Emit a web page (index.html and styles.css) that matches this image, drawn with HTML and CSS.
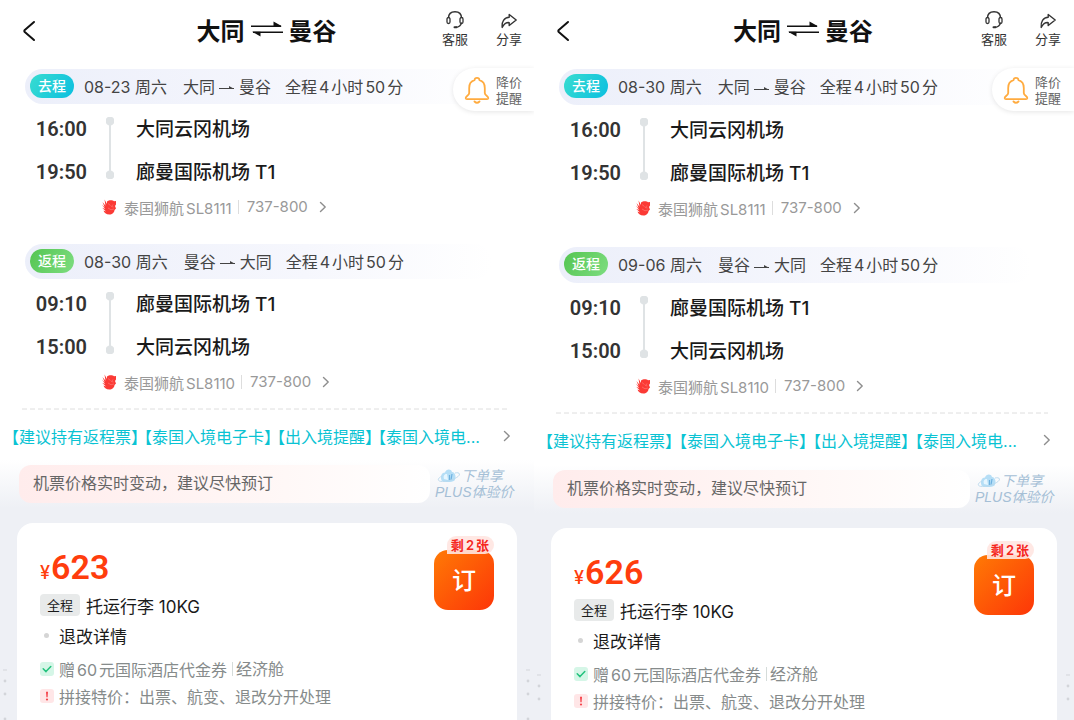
FILE: index.html
```html
<!DOCTYPE html>
<html lang="zh-CN">
<head>
    <meta charset="UTF-8">
    <meta name="viewport" content="width=device-width, initial-scale=1.0">
    <title>大同 - 曼谷 往返机票</title>
    <link rel="stylesheet" href="styles.css">
</head>
<body>

<!-- Shared icons -->
<svg class="sprite" aria-hidden="true">
    <symbol id="back" viewBox="0 0 14 22"><path d="M12 2 L2.500 10.300 Q2 11 2.500 11.700 L12 20" fill="none" stroke="#111" stroke-width="2" stroke-linecap="round" stroke-linejoin="round"/></symbol>
    <symbol id="swap" viewBox="0 0 32 18"><path d="M0 6.200H31L22.500 1.500V6.200M32 11.700H1L9.500 16.500V11.700" fill="#111" stroke="none"/><path d="M0 6.200H30M32 12.200H2" stroke="#111" stroke-width="1.600"/></symbol>
    <symbol id="headset" viewBox="0 0 20 20"><path d="M3.500 8C3.500 4 6 1.700 10 1.700S16.500 4 16.500 8M16.500 12.500C16 15.500 14 17.200 10.500 17.300" fill="none" stroke="#333" stroke-width="1.400"/><rect x="2" y="7.500" width="3" height="6" rx="1.500" fill="none" stroke="#333" stroke-width="1.300"/><rect x="15" y="7.500" width="3" height="6" rx="1.500" fill="none" stroke="#333" stroke-width="1.300"/><rect x="8.500" y="16.300" width="4" height="2" rx="1" fill="#333"/></symbol>
    <symbol id="share" viewBox="0 0 20 20"><path d="M10.200 4.500 L17.200 10 L10.200 15.500 V12.600 C7 12.300 5 14 3.200 17.400 C2.600 11.500 5 7.700 10.200 7.300 Z" fill="none" stroke="#333" stroke-width="1.400" stroke-linejoin="round"/></symbol>
    <symbol id="bell" viewBox="0 0 26 28"><path d="M10.500 4.200C10.800 1.200 15.200 1.200 15.500 4.200C19.500 5.300 20.800 8.500 20.800 12V17C20.800 19.500 24.500 20 24.300 22.200C24.200 23 23.800 23.200 23 23.200H3C2.200 23.200 1.800 23 1.700 22.200C1.500 20 5.200 19.500 5.200 17V12C5.200 8.500 6.500 5.300 10.500 4.200Z" fill="none" stroke="#ffab3f" stroke-width="1.800" stroke-linejoin="round"/><path d="M10.500 25.500Q13 28 15.500 25.500" fill="none" stroke="#ffab3f" stroke-width="1.800" stroke-linecap="round"/></symbol>
    <symbol id="to" viewBox="0 0 16 8"><path d="M0 4.500H15" stroke="#444"/><path d="M10 2L15 4.800H10Z" fill="#444"/></symbol>
    <symbol id="next" viewBox="0 0 8 12"><path d="M1.500 1.500 L6.200 6 L1.500 10.500" fill="none" stroke="#8e8e8e" stroke-width="1.400" stroke-linecap="round" stroke-linejoin="round"/></symbol>
    <symbol id="lion" viewBox="0 0 16 16"><path d="M6 2.500C8 .800 11.500 .800 13 2.200L15 2V5.500L14 7L15 9.500L13.500 11C13.500 13.500 11 15.500 8.500 15.500C5 15.500 3 13.500 2.500 11.500L5 12.500L1.200 8.800L4.200 10L.700 5.500L3.700 8.200L1.500 3L4.500 6.800L3.500 .500L6 5Z" fill="#fb3a35"/><path d="M7 4.500L9.500 6.500M12 5.500L10.500 7.500L12.500 8M7 9Q10 12 13 10" fill="none" stroke="#ff8f8b" stroke-width=".5"/></symbol>
    <symbol id="check" viewBox="0 0 14 14"><rect width="14" height="14" rx="3" fill="#d5f6e7"/><path d="M3.200 6.800 L6 9.600 L10.800 4.600" fill="none" stroke="#22c27d" stroke-width="1.500" stroke-linecap="round" stroke-linejoin="round"/></symbol>
    <symbol id="warn" viewBox="0 0 14 14"><rect width="14" height="14" rx="3" fill="#ffe6e7"/><path d="M6 2.800H8L7.600 8.300H6.400Z" fill="#f5444c"/><circle cx="7" cy="10.500" r="1.100" fill="#f5444c"/></symbol>
    <symbol id="plus" viewBox="0 0 24 16"><path d="M4.500 12.500C3 8 5 4.500 8 4.500C9 1 14 .500 15 4C18.500 4.500 19.500 9 17.500 12.500C14 14.500 8 14.500 4.500 12.500Z" fill="#b5def6"/><path d="M7 11C5.800 8 7.500 5.500 10 6L11 12Z" fill="#e6f6ff"/><path d="M12.500 7V12M15 6L14 12" stroke="#6fb2e0" stroke-width="1.200"/><path d="M5 8C0 10.500 0 13.500 5.500 13.500C13 13.500 23 9 22.500 6C22.300 4.700 20 4.500 18 5" fill="none" stroke="#b9d8ec" stroke-width=".9"/></symbol>
    <symbol id="marks" viewBox="0 0 4 52"><path d="M0 1H4" stroke="#d3d5da"/><circle cx="2" cy="12" r="1.400" fill="#d3d5da"/><circle cx="2" cy="25" r="1.400" fill="#d3d5da"/><circle cx="2" cy="50" r="1.400" fill="#d3d5da"/></symbol>
</svg>

<main class="compare">

    <section class="panel">
        <header class="topbar">
            <button class="icon-btn back" aria-label="返回"><svg width="14" height="22"><use href="#back"/></svg></button>
            <h1 class="route">大同<svg width="32" height="18"><use href="#swap"/></svg>曼谷</h1>
            <div class="actions">
                <button class="icon-btn"><svg width="20" height="20"><use href="#headset"/></svg>客服</button>
                <button class="icon-btn"><svg width="20" height="20"><use href="#share"/></svg>分享</button>
            </div>
        </header>
        <button class="remind"><svg width="26" height="28"><use href="#bell"/></svg><span>降价<br>提醒</span></button>

        <div class="legs">
            <article class="leg">
                <div class="leg-bar">
                    <span class="leg-tag go">去程</span>
                    <span class="date">08-23 周六</span>
                    <span class="cities">大同<svg width="16" height="8"><use href="#to"/></svg>曼谷</span>
                    <span>全程<span class="num">4</span>小时<span class="num">50</span>分</span>
                </div>
                <div class="stops">
                    <time>16:00</time><span class="line"></span><span class="airport">大同云冈机场</span>
                    <time>19:50</time><span class="airport">廊曼国际机场 T1</span>
                </div>
                <a class="flight" href="#"><svg width="16" height="16"><use href="#lion"/></svg><span>泰国狮航<span class="num">SL8111</span></span><span class="model">737-800</span><svg width="8" height="12"><use href="#next"/></svg></a>
            </article>
            <article class="leg">
                <div class="leg-bar">
                    <span class="leg-tag back-leg">返程</span>
                    <span class="date">08-30 周六</span>
                    <span class="cities">曼谷<svg width="16" height="8"><use href="#to"/></svg>大同</span>
                    <span>全程<span class="num">4</span>小时<span class="num">50</span>分</span>
                </div>
                <div class="stops">
                    <time>09:10</time><span class="line"></span><span class="airport">廊曼国际机场 T1</span>
                    <time>15:00</time><span class="airport">大同云冈机场</span>
                </div>
                <a class="flight" href="#"><svg width="16" height="16"><use href="#lion"/></svg><span>泰国狮航<span class="num">SL8110</span></span><span class="model">737-800</span><svg width="8" height="12"><use href="#next"/></svg></a>
            </article>
        </div>

        <svg class="dash" height="2" aria-hidden="true"><line x1="0" y1="1" x2="100%" y2="1"/></svg>
        <a class="tips" href="#"><span class="tips-text"><span>【建议持有返程票】</span><span>【泰国入境电子卡】</span><span>【出入境提醒】</span><span>【泰国入境电...</span></span><svg width="8" height="12"><use href="#next"/></svg></a>

        <div class="lower">
            <div class="notice-row">
                <p class="notice">机票价格实时变动，建议尽快预订</p>
                <p class="plus"><svg width="24" height="16"><use href="#plus"/></svg>下单享<br>PLUS体验价</p>
            </div>
            <div class="offer">
                <svg class="marks marks-left" width="4" height="52" aria-hidden="true"><use href="#marks"/></svg>
                <svg class="marks marks-right" width="4" height="52" aria-hidden="true"><use href="#marks"/></svg>
                <div class="offer-info">
                    <div class="price"><small>¥</small>623</div>
                    <div class="row"><span class="label">全程</span>托运行李 10KG</div>
                    <div class="row refund">退改详情</div>
                    <div class="row perk"><svg width="14" height="14"><use href="#check"/></svg><span>赠<span class="num">60</span>元国际酒店代金券</span><span class="cabin">经济舱</span></div>
                    <div class="row perk"><svg width="14" height="14"><use href="#warn"/></svg>拼接特价：出票、航变、退改分开处理</div>
                </div>
                <div class="book-box">
                    <button class="book">订</button>
                    <span class="left-count">剩<span class="num">2</span>张</span>
                </div>
            </div>
        </div>
    </section>

    <section class="panel roomy">
        <header class="topbar">
            <button class="icon-btn back" aria-label="返回"><svg width="14" height="22"><use href="#back"/></svg></button>
            <h1 class="route">大同<svg width="32" height="18"><use href="#swap"/></svg>曼谷</h1>
            <div class="actions">
                <button class="icon-btn"><svg width="20" height="20"><use href="#headset"/></svg>客服</button>
                <button class="icon-btn"><svg width="20" height="20"><use href="#share"/></svg>分享</button>
            </div>
        </header>
        <button class="remind"><svg width="26" height="28"><use href="#bell"/></svg><span>降价<br>提醒</span></button>

        <div class="legs">
            <article class="leg">
                <div class="leg-bar">
                    <span class="leg-tag go">去程</span>
                    <span class="date">08-30 周六</span>
                    <span class="cities">大同<svg width="16" height="8"><use href="#to"/></svg>曼谷</span>
                    <span>全程<span class="num">4</span>小时<span class="num">50</span>分</span>
                </div>
                <div class="stops">
                    <time>16:00</time><span class="line"></span><span class="airport">大同云冈机场</span>
                    <time>19:50</time><span class="airport">廊曼国际机场 T1</span>
                </div>
                <a class="flight" href="#"><svg width="16" height="16"><use href="#lion"/></svg><span>泰国狮航<span class="num">SL8111</span></span><span class="model">737-800</span><svg width="8" height="12"><use href="#next"/></svg></a>
            </article>
            <article class="leg">
                <div class="leg-bar">
                    <span class="leg-tag back-leg">返程</span>
                    <span class="date">09-06 周六</span>
                    <span class="cities">曼谷<svg width="16" height="8"><use href="#to"/></svg>大同</span>
                    <span>全程<span class="num">4</span>小时<span class="num">50</span>分</span>
                </div>
                <div class="stops">
                    <time>09:10</time><span class="line"></span><span class="airport">廊曼国际机场 T1</span>
                    <time>15:00</time><span class="airport">大同云冈机场</span>
                </div>
                <a class="flight" href="#"><svg width="16" height="16"><use href="#lion"/></svg><span>泰国狮航<span class="num">SL8110</span></span><span class="model">737-800</span><svg width="8" height="12"><use href="#next"/></svg></a>
            </article>
        </div>

        <svg class="dash" height="2" aria-hidden="true"><line x1="0" y1="1" x2="100%" y2="1"/></svg>
        <a class="tips" href="#"><span class="tips-text"><span>【建议持有返程票】</span><span>【泰国入境电子卡】</span><span>【出入境提醒】</span><span>【泰国入境电...</span></span><svg width="8" height="12"><use href="#next"/></svg></a>

        <div class="lower">
            <div class="notice-row">
                <p class="notice">机票价格实时变动，建议尽快预订</p>
                <p class="plus"><svg width="24" height="16"><use href="#plus"/></svg>下单享<br>PLUS体验价</p>
            </div>
            <div class="offer">
                <svg class="marks marks-left" width="4" height="52" aria-hidden="true"><use href="#marks"/></svg>
                <svg class="marks marks-right" width="4" height="52" aria-hidden="true"><use href="#marks"/></svg>
                <div class="offer-info">
                    <div class="price"><small>¥</small>626</div>
                    <div class="row"><span class="label">全程</span>托运行李 10KG</div>
                    <div class="row refund">退改详情</div>
                    <div class="row perk"><svg width="14" height="14"><use href="#check"/></svg><span>赠<span class="num">60</span>元国际酒店代金券</span><span class="cabin">经济舱</span></div>
                    <div class="row perk"><svg width="14" height="14"><use href="#warn"/></svg>拼接特价：出票、航变、退改分开处理</div>
                </div>
                <div class="book-box">
                    <button class="book">订</button>
                    <span class="left-count">剩<span class="num">2</span>张</span>
                </div>
            </div>
        </div>
    </section>

</main>

</body>
</html>
```

FILE: styles.css
```css
* {
    box-sizing: border-box;
}

body {
    margin: 0;
    font-family: Inter, "Noto Sans CJK SC", sans-serif;
    font-size: 16px;
    color: #1a1a1a;
    background-color: #fff;
}

h1, p {
    margin: 0;
}

a {
    color: inherit;
    text-decoration: none;
}

button {
    padding: 0;
    border: none;
    background: none;
    font-family: inherit;
    color: inherit;
    cursor: pointer;
}

svg {
    flex: none;
}

.sprite {
    position: absolute;
    width: 0;
    height: 0;
}

.num {
    margin: 0 2px;
}

/* Two trips side by side */
.compare {
    display: grid;
    grid-template-columns: 89fr 90fr;
    min-height: 100vh;
}

.panel {
    --bar: 35px;
    --leg-gap: 21px;
    --tips: 47px;
    --tips-gap: 5px;
    --edge: 12px;
    position: relative;
    display: flex;
    flex-direction: column;
    min-width: 0;
    overflow: hidden;
}

.panel.roomy {
    --bar: 36px;
    --leg-gap: 23px;
    --tips: 48px;
    --tips-gap: 6px;
    --edge: 13px;
}

/* Top bar */
.topbar {
    display: grid;
    grid-template-columns: 1fr auto 1fr;
    align-items: center;
    height: 62px;
    margin-bottom: 7px;
    padding: 0 var(--edge) 0 22px;
}

.route {
    display: flex;
    align-items: center;
    gap: 6px;
    margin: 0 11px 4px 0;
    font-size: 24px;
    font-weight: 600;
    color: #111;
}

.icon-btn {
    display: flex;
    flex-direction: column;
    align-items: center;
    font-size: 13px;
    line-height: 18px;
    color: #333;
}

.back {
    justify-self: start;
}

.actions {
    display: flex;
    justify-content: flex-end;
    gap: 28px;
    margin-bottom: 4px;
}

/* Price alert tab stuck to the edge */
.remind {
    position: absolute;
    top: 68px;
    right: 0;
    display: flex;
    align-items: center;
    gap: 6px;
    height: 43px;
    padding: 0 var(--edge) 0 11px;
    border-radius: 22px 0 0 22px;
    background-color: #fff;
    box-shadow: 0 1px 5px rgba(0, 0, 0, 0.1);
    font-size: 13px;
    line-height: 16px;
    color: #666;
}

/* Legs */
.legs {
    display: flex;
    flex-direction: column;
    gap: var(--leg-gap);
}

.leg-bar {
    display: flex;
    align-items: center;
    height: var(--bar);
    margin: 0 42px 0 25px;
    padding: 0 0 2px 5px;
    border-radius: 18px;
    background: linear-gradient(90deg, #eceffa, #f6f7fd 60%, #fff);
    color: #444;
    white-space: nowrap;
}

.leg-tag {
    width: 44px;
    margin-right: 10px;
    border-radius: 12px;
    font-size: 14px;
    font-weight: 500;
    line-height: 24px;
    text-align: center;
    color: #fff;
}

.go {
    background: linear-gradient(120deg, #38dcd0, #0cbfe0);
}

.back-leg {
    background: linear-gradient(120deg, #55c552, #7ddd80);
}

.date {
    margin-right: 16px;
}

.cities {
    margin-right: 14px;
}

.cities svg {
    margin: 0 4px;
    vertical-align: middle;
}

.stops {
    display: grid;
    grid-template-columns: 62px 10px auto;
    grid-auto-rows: 43px;
    column-gap: 18px;
    align-items: center;
    padding: 3px 0 0 25px;
}

.stops time {
    grid-column: 1;
    text-align: right;
    font-family: Roboto, sans-serif;
    font-size: 20px;
    font-weight: 600;
    color: #333;
}

.line {
    grid-column: 2;
    grid-row: 1 / span 2;
    justify-self: center;
    width: 8px;
    height: 62px;
    margin-bottom: 4px;
    background:
        radial-gradient(circle at 4px 4px, #dfe3e5 4px, transparent 5px),
        radial-gradient(circle at 4px 58px, #dfe3e5 4px, transparent 5px),
        linear-gradient(#dfe3e5, #dfe3e5) center / 2px 54px no-repeat;
}

.airport {
    grid-column: 3;
    padding: 0 0 2px 3px;
    font-size: 19px;
    font-weight: 500;
}

.flight {
    display: flex;
    align-items: center;
    height: 30px;
    padding: 0 0 2px 101px;
    font-size: 15px;
    color: #999;
}

.flight > svg:first-child {
    margin-right: 7px;
}

.model {
    margin: 0 11px 0 4px;
    padding-left: 8px;
    border-left: 1px solid #ddd;
    line-height: 14px;
}

/* Entry tips */
.dash {
    width: calc(100% - 48px);
    margin: 10px 0 0 22px;
}

.dash line {
    stroke: #dedede;
    stroke-width: 1;
    stroke-dasharray: 5 3;
}

.tips {
    display: flex;
    align-items: center;
    justify-content: space-between;
    height: var(--tips);
    margin: 3px 23px 0 11px;
    padding-bottom: 2px;
    color: #0ac3d3;
}

.tips-text {
    display: flex;
    gap: var(--tips-gap);
    overflow: hidden;
    white-space: nowrap;
    font-feature-settings: "halt";
}

/* Grey lower part */
.lower {
    flex: 1;
    display: flex;
    flex-direction: column;
    gap: 20px;
    padding: 5px 17px 0;
    background: linear-gradient(#fff, #eef0f5 48px);
}

.notice-row {
    display: flex;
    align-items: center;
    gap: 5px;
    height: 38px;
    padding-left: 2px;
}

.notice {
    flex: 1;
    height: 38px;
    padding-left: 14px;
    border-radius: 12px;
    background: linear-gradient(90deg, #ffecec, #fff7f6 60%, #fff);
    line-height: 36px;
    color: #666;
}

.plus {
    width: 82px;
    font-family: "Liberation Sans", "Noto Sans CJK SC", sans-serif;
    font-size: 14px;
    font-style: italic;
    line-height: 16px;
    white-space: nowrap;
    color: #a5bfd6;
}

.plus svg {
    margin-left: 2px;
    vertical-align: top;
}

/* Offer card */
.offer {
    position: relative;
    flex: 1;
    display: flex;
    justify-content: space-between;
    padding: 22px 23px 8px;
    border-radius: 16px 16px 0 0;
    background-color: #fff;
}

.marks {
    position: absolute;
    top: 146px;
}

.marks-left {
    left: -14px;
}

.marks-right {
    right: -13px;
}

.price {
    height: 45px;
    font-family: Roboto, sans-serif;
    font-size: 34px;
    font-weight: 600;
    line-height: 44px;
    color: #ff3d0d;
}

.price small {
    margin-right: 1px;
    font-family: Inter, sans-serif;
    font-size: 18px;
    font-weight: 500;
}

.row {
    display: flex;
    align-items: center;
    height: 30px;
    font-size: 17px;
}

.label {
    margin-right: 6px;
    padding: 0 7px;
    border-radius: 4px;
    background-color: #e8eaea;
    font-size: 13px;
    line-height: 22px;
}

.refund {
    gap: 10px;
    margin-bottom: 5px;
    padding-left: 4px;
}

.refund::before {
    content: "";
    width: 5px;
    height: 5px;
    border-radius: 50%;
    background-color: #d5d5d5;
}

.perk {
    gap: 5px;
    height: 27px;
    font-size: 16px;
    color: #868b8b;
}

.cabin {
    padding-left: 3px;
    border-left: 1px solid #d5dcda;
    line-height: 14px;
}

.book-box {
    position: relative;
    padding-top: 5px;
}

.book {
    width: 60px;
    height: 60px;
    padding-bottom: 4px;
    border-radius: 14px;
    background: linear-gradient(135deg, #ff7a05, #fd3608);
    font-size: 24px;
    font-weight: 500;
    color: #fff;
}

.left-count {
    position: absolute;
    top: -9px;
    right: 0;
    padding: 0 5px 0 4px;
    border-radius: 9px 9px 9px 0;
    background-color: rgba(255, 230, 225, 0.9);
    font-size: 13px;
    font-weight: 600;
    line-height: 18px;
    white-space: nowrap;
    color: #f5261c;
}
```
